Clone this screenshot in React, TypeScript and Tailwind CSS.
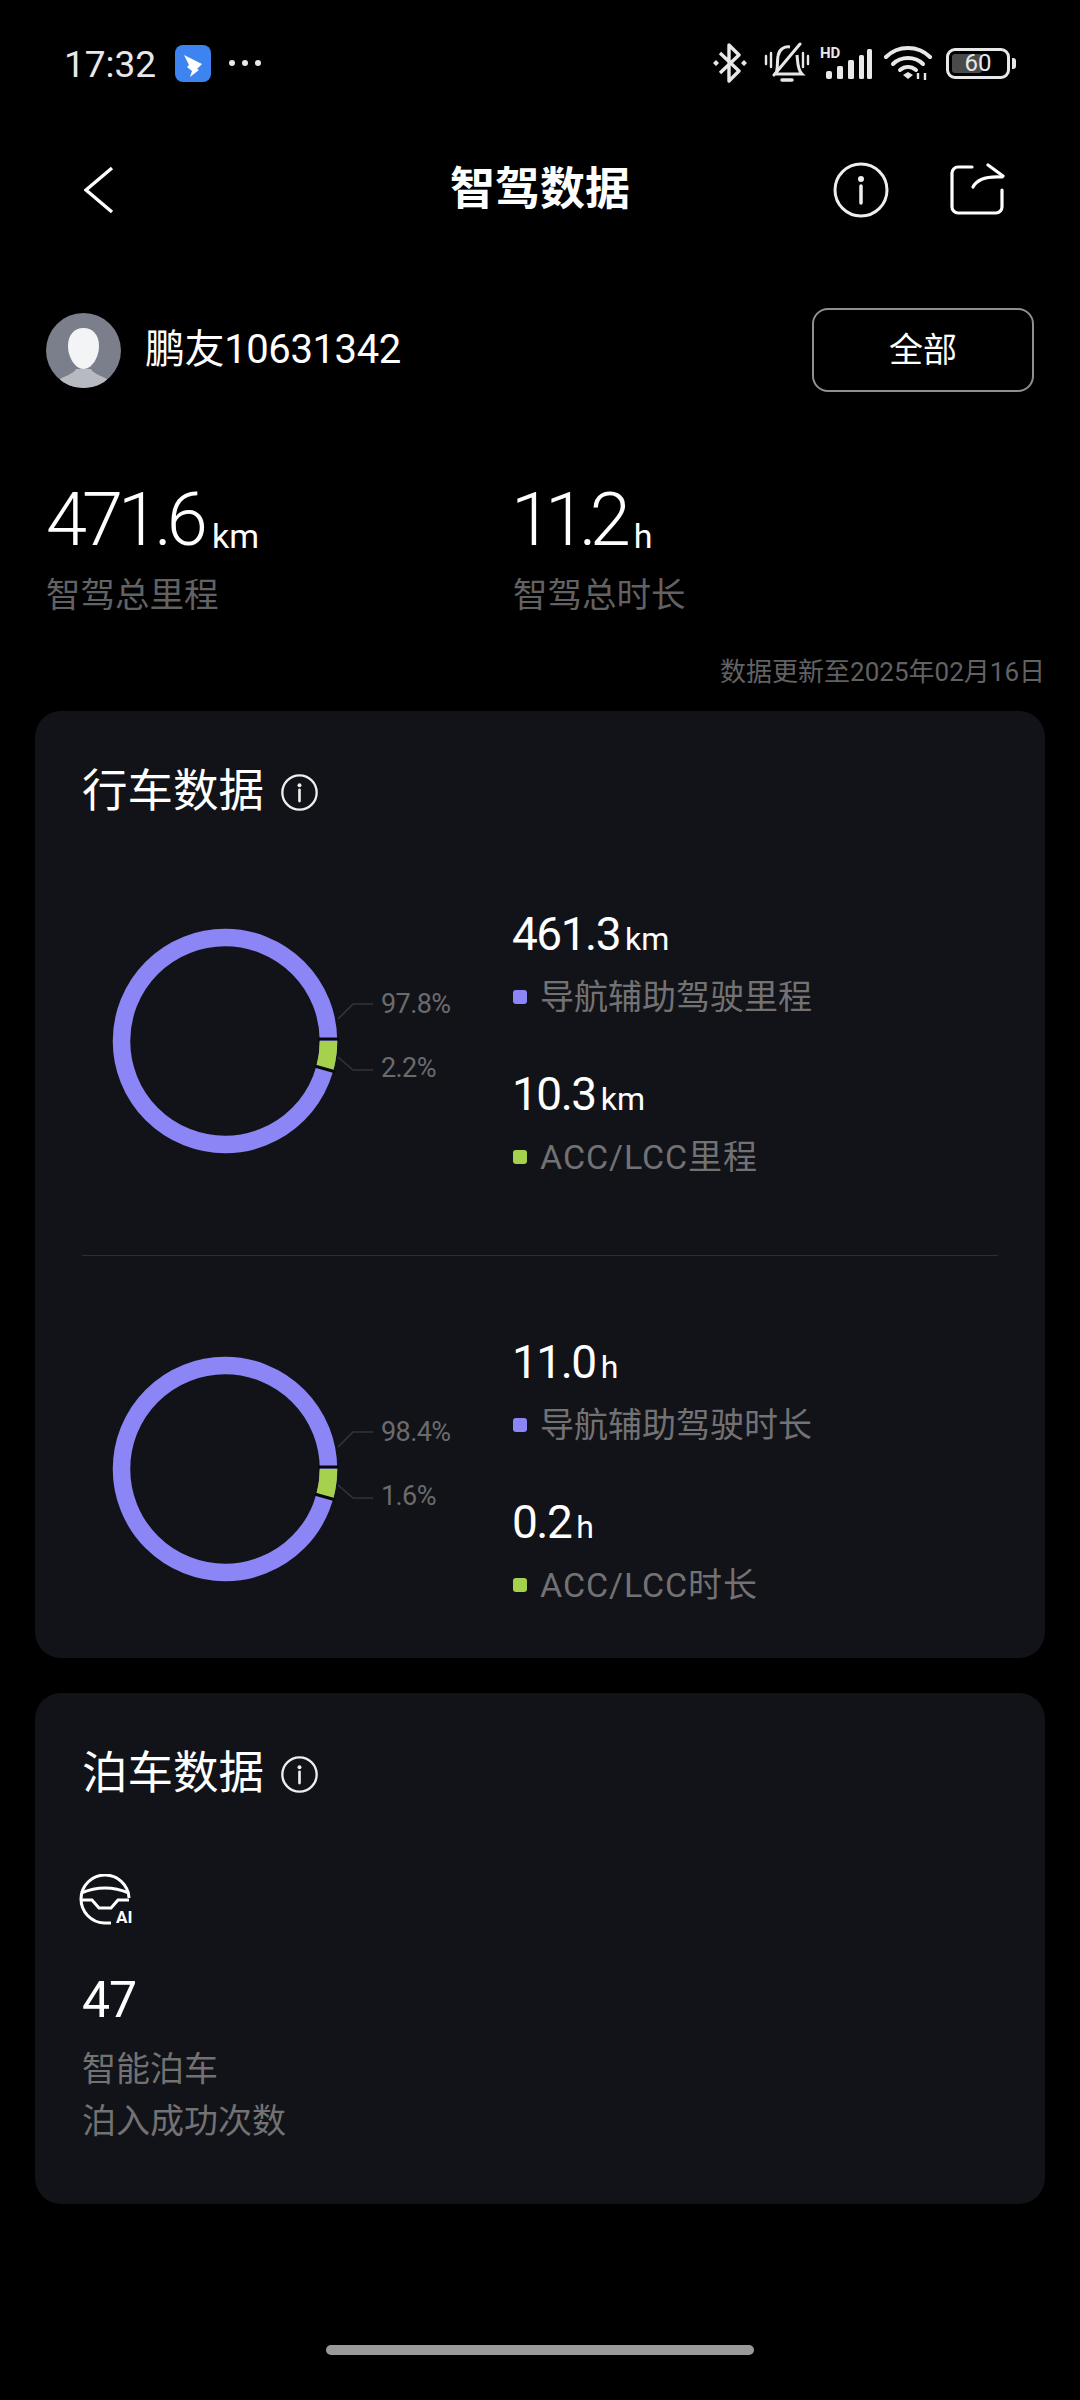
import React from 'react';

const font = "font-['Roboto','Noto_Sans_CJK_SC',sans-serif]";

const InfoIcon = ({ size, stroke }: { size: number; stroke: number }) => (
  <svg width={size} height={size} viewBox="0 0 56 56" fill="none" stroke="#eeeeee">
    <circle cx="28" cy="28" r="26" strokeWidth={stroke} />
    <circle cx="28" cy="17" r="3" fill="#eeeeee" stroke="none" />
    <path d="M28 24V41" strokeWidth={stroke + 0.5} strokeLinecap="round" />
  </svg>
);

const StatusIcons = () => (
  <div className="flex items-center text-[#e8e8e8]">
    <svg width="38" height="40" viewBox="0 0 38 40" fill="none" stroke="currentColor" strokeWidth="3.4" className="mr-[15px]">
      <path d="M9 10 L28 28 L18 38 V2 L28 12 L9 30" strokeLinejoin="round" />
      <path d="M2 20l3-3 3 3-3 3z M30 20l3-3 3 3-3 3z" fill="currentColor" stroke="none" />
    </svg>
    <svg width="46" height="42" viewBox="0 0 46 42" fill="none" stroke="currentColor" strokeWidth="3" className="mr-[10px]">
      <path d="M12 32 C14 26 13 20 14 14 C15 7 21 4 26 5 M33 13 C34 20 33 27 38 32 H12" />
      <path d="M10 33 L36 2" strokeLinecap="round" />
      <path d="M18 38 H28" strokeWidth="3.4" strokeLinecap="round" />
      <path d="M2 14V22 M7 11V25 M39 11V25 M44 14V22" strokeWidth="2.4" strokeLinecap="round" />
    </svg>
    <svg width="52" height="36" viewBox="0 0 52 36" className="mr-[12px] overflow-visible" fill="currentColor">
      <text x="0" y="13" fontSize="15" fontWeight="700" fontFamily="Roboto, sans-serif">HD</text>
      <rect x="6" y="26" width="6" height="8" rx="2" />
      <rect x="17" y="21" width="6" height="13" rx="1.5" />
      <rect x="28" y="15" width="6" height="19" rx="1.5" />
      <rect x="39" y="10" width="5" height="24" rx="1.5" />
      <rect x="47" y="4" width="5" height="30" rx="1.5" />
    </svg>
    <svg width="48" height="36" viewBox="0 0 48 36" fill="none" stroke="currentColor" strokeWidth="4" className="mr-[14px]">
      <path d="M2 12 C14 0 34 0 46 12" strokeLinecap="round" />
      <path d="M9 19 C17 11 31 11 39 19" strokeLinecap="round" />
      <path d="M16 25 C21 21 27 21 32 25" strokeLinecap="round" />
      <path d="M19 30 L24 27 L29 30 L24 34Z" fill="currentColor" stroke="none" />
      <path d="M34 34V28 M41 28V35" strokeWidth="2.4" />
    </svg>
    <div className="flex items-center">
      <div className="relative w-[64px] h-[31px] rounded-[9px] border-[3px] border-[#e8e8e8] overflow-hidden">
        <div className="absolute left-[3px] top-[3px] bottom-[3px] w-[30px] rounded-[3px] bg-[#4a4a4a]" />
        <div className="absolute inset-0 flex items-center justify-center text-[24px] leading-none text-[#e8e8e8]">60</div>
      </div>
      <div className="ml-[2px] w-[4px] h-[11px] rounded-r-[3px] bg-[#e8e8e8]" />
    </div>
  </div>
);

const Donut = ({ a, b }: { a: string; b: string }) => (
  <svg width="418" height="260" viewBox="0 0 418 260" fill="none">
    <g transform="translate(130 130)">
      <circle r="103.5" stroke="#8c85f5" strokeWidth="17.5" />
      <path d="M103.5 0 A103.5 103.5 0 0 1 99.7 27.8" stroke="#a5d14c" strokeWidth="17.5" />
      <path d="M93 -2 H114" stroke="#07080a" strokeWidth="3" />
      <path d="M90.5 25.2 L110 30.8" stroke="#07080a" strokeWidth="3" />
    </g>
    <path d="M243 108 L258 93 H278" stroke="#33353a" strokeWidth="1.5" />
    <path d="M243 146 L258 159 H278" stroke="#33353a" strokeWidth="1.5" />
    <text x="286" y="102" fontSize="27" letterSpacing="-0.6" fill="#6b6b6d" fontFamily="Roboto, sans-serif">{a}</text>
    <text x="286" y="166" fontSize="27" letterSpacing="-0.6" fill="#6b6b6d" fontFamily="Roboto, sans-serif">{b}</text>
  </svg>
);

const Metric = ({ value, unit, color, label, wide }: { value: string; unit: string; color: string; label: string; wide?: boolean }) => (
  <div className="h-[160px]">
    <div className="h-[58px] flex items-baseline text-white -ml-[1px]">
      <span className="text-[46px] leading-[58px] tracking-[-1.5px]">{value}</span>
      <span className="text-[32px] leading-[58px] ml-[5px]">{unit}</span>
    </div>
    <div className="flex items-center mt-[11px]">
      <span className="w-[14px] h-[14px] rounded-[3px] mr-[13px]" style={{ background: color }} />
      <span className={wide ? 'text-[34px] leading-[46px] text-[#727274] tracking-[0.9px]' : 'text-[34px] leading-[46px] text-[#727274]'}>{label}</span>
    </div>
  </div>
);

const ChartRow = (p: { a: string; b: string; v1: string; u1: string; l1: string; v2: string; u2: string; l2: string }) => (
  <div className="flex h-[356px]">
    <div className="w-[431px] pl-[13px] pt-[42px]">
      <Donut a={p.a} b={p.b} />
    </div>
    <div className="pt-[36px]">
      <Metric value={p.v1} unit={p.u1} color="#8c85f5" label={p.l1} />
      <Metric value={p.v2} unit={p.u2} color="#a5d14c" label={p.l2} wide />
    </div>
  </div>
);

const CardTitle = ({ children }: { children: string }) => (
  <div className="flex items-center h-[60px] text-white">
    <span className="text-[45.5px] leading-[60px]">{children}</span>
    <span className="ml-[17px]">
      <InfoIcon size={37} stroke={3.5} />
    </span>
  </div>
);

export default function App() {
  return (
    <div className={`${font} w-[1080px] h-[2400px] bg-black flex flex-col relative overflow-hidden`}>
      {/* status bar */}
      <div className="h-[126px] flex items-center justify-between pl-[64px] pr-[64px]">
        <div className="flex items-center text-[#e8e8e8]">
          <span className="text-[37px] leading-none pt-[2px]">17:32</span>
          <svg width="36" height="37" viewBox="0 0 36 37" className="ml-[19px]">
            <rect width="36" height="37" rx="8" fill="#3d84f0" />
            <path d="M9 10 L27 19 L22 24 L24 25 L15 32 L17 26 L12 22 L14 20 Z" fill="#ffffff" />
          </svg>
          <span className="ml-[18px] flex gap-[7px]">
            <span className="w-[6px] h-[6px] rounded-full bg-[#e8e8e8]" />
            <span className="w-[6px] h-[6px] rounded-full bg-[#e8e8e8]" />
            <span className="w-[6px] h-[6px] rounded-full bg-[#e8e8e8]" />
          </span>
        </div>
        <StatusIcons />
      </div>

      {/* header */}
      <div className="h-[128px] relative flex items-center justify-center">
        <svg width="32" height="52" viewBox="0 0 32 52" fill="none" stroke="#ffffff" strokeWidth="3.4" className="absolute left-[84px] top-[38px]">
          <path d="M28 4 L2 26 L28 48" />
        </svg>
        <span className="text-[45px] font-bold text-white">智驾数据</span>
        <div className="absolute left-[833px] top-[36px]">
          <InfoIcon size={56} stroke={3} />
        </div>
        <svg width="56" height="54" viewBox="0 0 56 54" fill="none" stroke="#ffffff" strokeWidth="3.2" className="absolute left-[949px] top-[36px]" strokeLinecap="round">
          <path d="M23 5 H9 a6 6 0 0 0 -6 6 V45 a6 6 0 0 0 6 6 H47 a6 6 0 0 0 6 -6 V28" />
          <path d="M24 25 C28 17 37 14 53 15" />
          <path d="M39 3 L54 14" />
        </svg>
      </div>

      {/* user row */}
      <div className="mt-[54px] h-[84px] flex items-center justify-between pl-[46px] pr-[46px]">
        <div className="flex items-center">
          <svg width="75" height="75" viewBox="0 0 75 75">
            <clipPath id="av"><circle cx="37.5" cy="37.5" r="37.5" /></clipPath>
            <g clipPath="url(#av)">
              <rect width="75" height="75" fill="#7b7f8b" />
              <path d="M14 66 C22 62 28 60 30 56 H45 C47 60 53 62 61 66 V75 H14Z" fill="#b7bac1" />
              <path d="M37.5 15 C47 15 53 22 53 33 C53 44 46 56 37.5 56 C29 56 22 44 22 33 C22 22 28 15 37.5 15Z" fill="#f2f4f6" />
            </g>
          </svg>
          <span className="ml-[24px] text-[40px] tracking-[-0.4px] text-white">鹏友10631342</span>
        </div>
        <div className="w-[222px] h-[84px] rounded-[16px] border-[2px] border-[#8f8f8f] flex items-center justify-center text-[34px] text-white">全部</div>
      </div>

      {/* totals */}
      <div className="mt-[86px] pl-[46px] flex">
        <div className="w-[467px]">
          <div className="h-[84px] flex items-baseline text-white">
            <span className="text-[74px] leading-[84px] tracking-[-5px] font-light">471.6</span>
            <span className="text-[34px] ml-[9px] translate-y-[3px]">km</span>
          </div>
          <div className="text-[34.5px] leading-[46px] mt-[10px] text-[#626264]">智驾总里程</div>
        </div>
        <div>
          <div className="h-[84px] flex items-baseline text-white -ml-[2px]">
            <span className="text-[74px] leading-[84px] tracking-[-7px] font-light">11.2</span>
            <span className="text-[34px] ml-[10px] translate-y-[3px]">h</span>
          </div>
          <div className="text-[34.5px] leading-[46px] mt-[10px] text-[#626264]">智驾总时长</div>
        </div>
      </div>
      <div className="mt-[36px] pr-[35px] text-right text-[26px] leading-[36px] text-[#626264]">数据更新至2025年02月16日</div>

      {/* driving card */}
      <div className="mt-[21px] mx-[35px] h-[947px] rounded-[26px] bg-[#121318] px-[47px] pt-[51px]">
        <CardTitle>行车数据</CardTitle>
        <div className="mt-[47px]">
          <ChartRow a="97.8%" b="2.2%" v1="461.3" u1="km" l1="导航辅助驾驶里程" v2="10.3" u2="km" l2="ACC/LCC里程" />
        </div>
        <div className="h-px bg-[#2c2e33] mt-[30px] mb-[41px]" />
        <ChartRow a="98.4%" b="1.6%" v1="11.0" u1="h" l1="导航辅助驾驶时长" v2="0.2" u2="h" l2="ACC/LCC时长" />
      </div>

      {/* parking card */}
      <div className="mt-[35px] mx-[35px] h-[511px] rounded-[26px] bg-[#121318] px-[47px] pt-[51px]">
        <CardTitle>泊车数据</CardTitle>
        <svg width="60" height="52" viewBox="0 0 60 52" fill="none" stroke="#ffffff" strokeWidth="3" className="mt-[70px] -ml-[4px]">
          <path d="M33 49 H26 A24 24 0 1 1 51 24" />
          <path d="M3 19 Q27 9 51 19" />
          <path d="M3 26 H14 L21 34 H33 L40 26 H51" />
          <text x="38" y="49" fontSize="17" fontWeight="700" fill="#ffffff" stroke="none" fontFamily="Roboto, sans-serif">AI</text>
        </svg>
        <div className="mt-[44px] text-[50px] leading-[60px] tracking-[-1px] text-white">47</div>
        <div className="mt-[13px] text-[34px] leading-[52px] text-[#727274]">
          <div>智能泊车</div>
          <div>泊入成功次数</div>
        </div>
      </div>

      <div className="absolute left-[326px] top-[2345px] w-[428px] h-[10px] rounded-full bg-[#9a9a9a]" />
    </div>
  );
}
